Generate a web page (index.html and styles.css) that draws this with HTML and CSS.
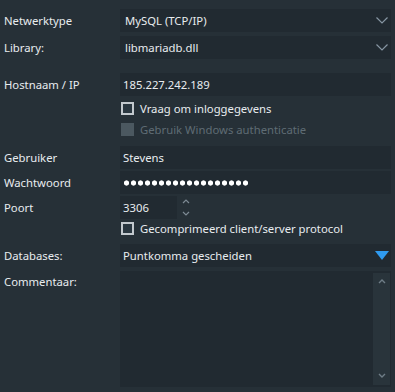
FILE: index.html
```html
<!DOCTYPE html>
<html lang="nl">
<head>
    <meta charset="UTF-8">
    <title>Sessie instellingen</title>
    <link rel="stylesheet" href="styles.css">
</head>
<body>
    <div class="settings">
        <!-- Verbinding -->
        <div class="row r-type">
            <label>Netwerktype</label>
            <div class="field combo">
                <span>MySQL (TCP/IP)</span>
                <svg class="chevron" width="12" height="7" viewBox="0 0 12 7"><path d="M0.5 0.5 L6 6 L11.5 0.5" fill="none" stroke="#8796a3" stroke-width="1.2"/></svg>
            </div>
        </div>
        <div class="row r-lib">
            <label>Library:</label>
            <div class="field combo">
                <span>libmariadb.dll</span>
                <svg class="chevron" width="12" height="7" viewBox="0 0 12 7"><path d="M0.5 0.5 L6 6 L11.5 0.5" fill="none" stroke="#8796a3" stroke-width="1.2"/></svg>
            </div>
        </div>
        <div class="row r-host">
            <label>Hostnaam / IP</label>
            <div class="field edit">185.227.242.189</div>
        </div>
        <div class="row check r-ask">
            <span></span>
            <div class="checkbox"><span class="box"></span>Vraag om inloggegevens</div>
        </div>
        <div class="row check r-win">
            <span></span>
            <div class="checkbox disabled"><span class="box"></span>Gebruik Windows authenticatie</div>
        </div>

        <!-- Gebruiker -->
        <div class="row r-user">
            <label>Gebruiker</label>
            <div class="field edit">Stevens</div>
        </div>
        <div class="row r-pass">
            <label>Wachtwoord</label>
            <div class="field edit"><span class="dots"></span></div>
        </div>
        <div class="row r-port">
            <label>Poort</label>
            <div class="port">
                <div class="field edit port-input">3306</div>
                <div class="spin">
                    <svg width="8" height="5" viewBox="0 0 8 5"><path d="M1 4 L4 1 L7 4" fill="none" stroke="#7d8a94" stroke-width="1.2"/></svg>
                    <svg width="8" height="5" viewBox="0 0 8 5"><path d="M1 1 L4 4 L7 1" fill="none" stroke="#7d8a94" stroke-width="1.2"/></svg>
                </div>
            </div>
        </div>
        <div class="row check r-compress">
            <span></span>
            <div class="checkbox"><span class="box"></span>Gecomprimeerd client/server protocol</div>
        </div>

        <!-- Databases -->
        <div class="row r-db">
            <label>Databases:</label>
            <div class="field combo">
                <span>Puntkomma gescheiden</span>
                <svg class="triangle" width="14" height="9" viewBox="0 0 14 9"><path d="M0 0 H14 L7 9 Z" fill="#2f9bf0"/></svg>
            </div>
        </div>
        <div class="row memo r-comment">
            <label>Commentaar:</label>
            <div class="field textarea">
                <div class="scrollbar">
                    <svg width="8" height="5" viewBox="0 0 8 5"><path d="M1 4 L4 1 L7 4" fill="none" stroke="#6f7d87" stroke-width="1.4"/></svg>
                    <svg width="8" height="5" viewBox="0 0 8 5"><path d="M1 1 L4 4 L7 1" fill="none" stroke="#6f7d87" stroke-width="1.4"/></svg>
                </div>
            </div>
        </div>
    </div>
</body>
</html>
```

FILE: styles.css
```css
body {
    margin: 0;
    padding: 0;
    background-color: #263037;
    color: #e8ecef;
    font-family: "Noto Sans", "Open Sans", sans-serif;
    font-size: 11.3px;
    height: 392px;
    overflow: hidden;
}
.settings {
    padding: 9px 4px 0 4px;
}
.row {
    display: grid;
    grid-template-columns: 116px 271px;
    align-items: center;
    height: 23px;
}
.row label {
    white-space: nowrap;
}
.row.check {
    height: 19px;
}
.r-lib { margin-top: 4px; }
.r-host { margin-top: 14px; }
.r-ask { margin-top: 3px; }
.r-win { margin-top: 2px; }
.r-user { margin-top: 7px; }
.r-pass, .r-port { margin-top: 2px; }
.r-db { margin-top: 6px; }
.r-comment {
    margin-top: 4px;
    height: 116px;
    align-items: start;
}
.r-comment label {
    margin-top: 3px;
}
.field {
    background-color: #212a31;
    height: 23px;
    display: flex;
    align-items: center;
    padding-left: 3px;
    box-sizing: border-box;
    white-space: nowrap;
}
.combo {
    justify-content: space-between;
    padding-left: 5px;
    padding-right: 3px;
}
.r-db .combo {
    padding-left: 3px;
    padding-right: 2px;
}
.dots {
    display: inline-block;
    width: 126px;
    height: 6px;
    background-image: radial-gradient(circle, #ffffff 2.3px, transparent 2.9px);
    background-size: 7px 6px;
    background-repeat: repeat-x;
}
.port {
    display: flex;
    align-items: center;
}
.port-input {
    width: 57px;
}
.spin {
    display: flex;
    flex-direction: column;
    gap: 7px;
    margin-left: 5px;
}
.checkbox {
    display: flex;
    align-items: center;
    gap: 6px;
    padding-left: 1px;
    white-space: nowrap;
}
.box {
    width: 13px;
    height: 13px;
    box-sizing: border-box;
    border: 2px solid #c3c9ce;
    background-color: #2a3740;
}
.checkbox.disabled {
    color: #5f6c74;
}
.checkbox.disabled .box {
    border: none;
    background-color: #4b5860;
}
.textarea {
    height: 116px;
    justify-content: flex-end;
    align-items: stretch;
    padding: 2px 1px 2px 0;
}
.scrollbar {
    width: 17px;
    background-color: #29343b;
    display: flex;
    flex-direction: column;
    align-items: center;
    justify-content: space-between;
    padding: 6px 0 7px 0;
}
```
